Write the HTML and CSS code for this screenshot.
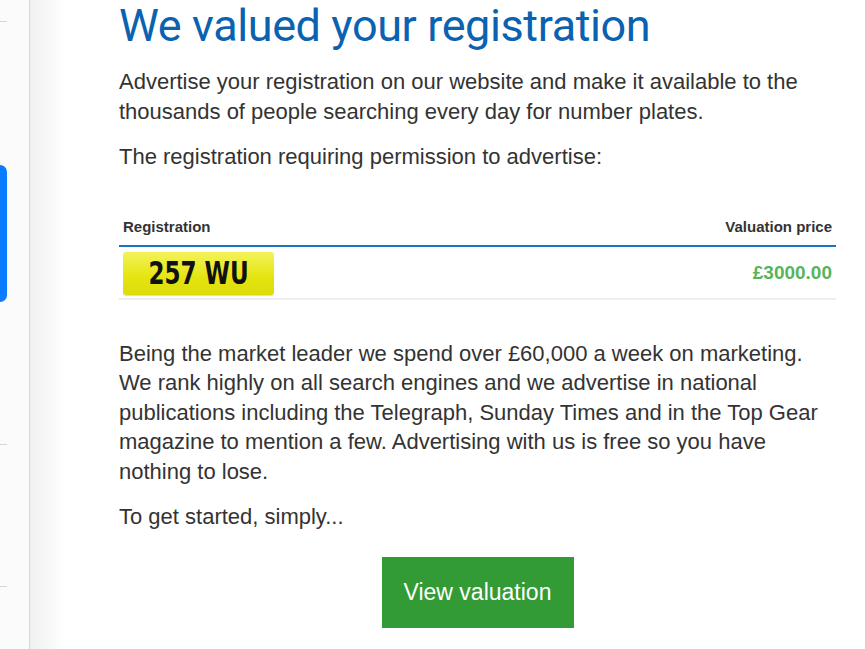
FILE: index.html
```html
<!DOCTYPE html>
<html lang="en">
<head>
  <meta charset="UTF-8">
  <meta name="viewport" content="width=device-width, initial-scale=1.0">
  <title>We valued your registration</title>
  <link rel="stylesheet" href="styles.css">
</head>
<body>
  <div class="page">
    <aside class="side">
      <span class="side-line line1"></span>
      <span class="side-tab"></span>
      <span class="side-line line2"></span>
      <span class="side-line line3"></span>
    </aside>

    <main class="panel">
      <section class="content">
        <h1 class="title">We valued your registration</h1>
        <p>Advertise your registration on our website and make it available to the thousands of people searching every day for number plates.</p>
        <p>The registration requiring permission to advertise:</p>

        <table class="reg-table">
          <thead>
            <tr>
              <th class="col-reg">Registration</th>
              <th class="col-price">Valuation price</th>
            </tr>
          </thead>
          <tbody>
            <tr>
              <td class="col-reg"><span class="plate"><span class="plate-text">257 WU</span></span></td>
              <td class="col-price price">£3000.00</td>
            </tr>
          </tbody>
        </table>

        <p class="gap-top">Being the market leader we spend over £60,000 a week on marketing. We rank highly on all search engines and we advertise in national publications including the Telegraph, Sunday Times and in the Top Gear magazine to mention a few. Advertising with us is free so you have nothing to lose.</p>
        <p>To get started, simply...</p>

        <div class="actions">
          <a href="#" class="btn-green">View valuation</a>
        </div>
      </section>
    </main>
  </div>
</body>
</html>
```

FILE: styles.css
```css
*{margin: 0; padding: 0; box-sizing: border-box;}
body{
  font-family: "Liberation Sans", Arial, sans-serif;
  color: #333;
  background: #fff;
}
.page{
  display: flex;
  min-height: 649px;
}
/* 왼쪽 사이드 */
.side{
  width: 30px;
  flex-shrink: 0;
  background: #fbfbfb;
  border-right: 1px solid #d9d9d9;
  display: flex;
  flex-direction: column;
  padding-top: 21px;
}
.side-line{
  display: block;
  width: 7px;
  height: 1px;
  background: #d6d6d6;
}
.side-tab{
  display: block;
  width: 7px;
  height: 137px;
  margin-top: 143px;
  background: #0a7cff;
  border-radius: 0 7px 7px 0;
}
.line2{margin-top: 142px;}
.line3{margin-top: 141px;}

/* 본문 */
.panel{
  flex: 1;
  background: linear-gradient(to right, #f0f0f0, #fff 36px);
}
.content{
  width: 717px;
  margin-left: 89px;
}
.title{
  font-family: Roboto, "Liberation Sans", sans-serif;
  font-weight: 400;
  font-size: 45px;
  line-height: 52px;
  color: #0a62b0;
  margin-bottom: 15px;
  letter-spacing: -0.4px;
}
.content p{
  font-size: 22px;
  line-height: 29.5px;
  margin-bottom: 16px;
}
.reg-table{
  width: 100%;
  border-collapse: collapse;
  margin-top: 46px;
}
.reg-table th{
  font-size: 15px;
  line-height: 17px;
  font-weight: bold;
  text-align: left;
  padding: 0 4px 10px;
  border-bottom: 2px solid #1a73c4;
}
.reg-table td{
  padding: 5px 4px 3px;
  border-bottom: 2px solid #eee;
  line-height: 0;
}
.reg-table .col-price{text-align: right;}
.price{
  font-size: 19px;
  font-weight: bold;
  color: #58b45b;
  line-height: 20px;
}
/* 번호판 */
.plate{
  display: inline-block;
  width: 151px;
  height: 43px;
  line-height: 43px;
  text-align: center;
  background: linear-gradient(#f3f35a, #e4e410 60%, #dcdc0c);
  border-radius: 3px;
  box-shadow: 0 1px 1px rgba(0,0,0,0.15);
}
.plate-text{
  display: inline-block;
  font-family: "DejaVu Sans", sans-serif;
  font-stretch: condensed;
  font-weight: bold;
  font-size: 32px;
  color: #111;
  transform: scaleX(0.8);
}
.gap-top{margin-top: 39px;}
.actions{
  display: flex;
  justify-content: center;
  margin-top: 25px;
}
.btn-green{
  display: inline-block;
  width: 192px;
  height: 71px;
  line-height: 71px;
  text-align: center;
  background: #339b35;
  color: #fff;
  font-size: 23px;
  text-decoration: none;
}
```
